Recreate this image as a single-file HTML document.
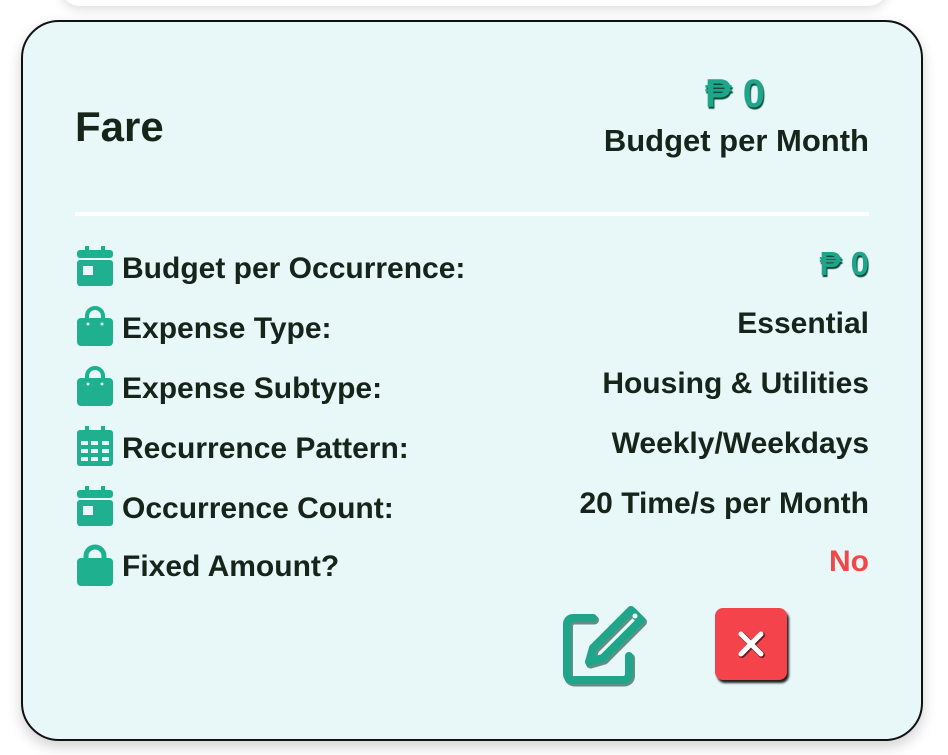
<!DOCTYPE html>
<html><head><style>
body{margin:0;width:948px;height:755px;background:#fff;position:relative;overflow:hidden;font-family:"Liberation Sans",Arial,sans-serif;}
.top{position:absolute;left:60px;top:-20px;width:828px;height:26px;background:#fff;border-radius:0 0 20px 20px;box-shadow:0 4px 10px rgba(0,0,0,.12);}
.card{position:absolute;left:21px;top:20px;width:898px;height:717px;border:2px solid #111;border-radius:38px;background:#e8f7f8;box-shadow:0 6px 14px rgba(0,0,0,.18);}
.t{position:absolute;color:#16241a;font-weight:bold;white-space:nowrap;}
.g{color:#1fa68a;text-shadow:1px 2px 1px #0a4a3a;}
.row{position:absolute;left:54px;width:792px;height:40px;}
.row svg{position:absolute;left:0;top:0;}
.row .l{left:45px;font-size:30px;top:6px;}
.row .v{right:0;font-size:30px;top:1px;}
</style></head><body>
<div class="top"></div>
<div class="card">
<div class="t" style="left:52px;top:81px;font-size:42px;">Fare</div>
<div class="t g" style="left:682px;top:50px;font-size:40px;">₱ 0</div>
<div class="t" style="right:52px;top:101px;font-size:31px;">Budget per Month</div>
<div style="position:absolute;left:52px;top:190px;width:794px;height:4px;background:#fff;"></div>

<div class="row" style="top:224px"><svg width="36" height="42" viewBox="0 0 36 42"><rect x="8" y="0" width="4" height="8" fill="#1fb08f"/><rect x="24" y="0" width="4" height="8" fill="#1fb08f"/><rect x="0" y="4" width="36" height="8" rx="3" fill="#1fb08f"/><rect x="0" y="14" width="36" height="26" rx="3" fill="#1fb08f"/><rect x="6" y="20" width="10" height="9" fill="#e8f7f8"/></svg><div class="t l">Budget per Occurrence:</div><div class="t v g" style="font-size:33px;top:-1px">₱ 0</div></div>

<div class="row" style="top:284px"><svg width="36" height="42" viewBox="0 0 36 42"><path d="M10 14V10a8 8 0 0 1 16 0v4" fill="none" stroke="#1fb08f" stroke-width="4"/><rect x="0" y="12" width="36" height="28" rx="4" fill="#1fb08f"/><circle cx="11" cy="18" r="1.5" fill="#e8f7f8"/><circle cx="25" cy="18" r="1.5" fill="#e8f7f8"/></svg><div class="t l">Expense Type:</div><div class="t v">Essential</div></div>

<div class="row" style="top:344px"><svg width="36" height="42" viewBox="0 0 36 42"><path d="M10 14V10a8 8 0 0 1 16 0v4" fill="none" stroke="#1fb08f" stroke-width="4"/><rect x="0" y="12" width="36" height="28" rx="4" fill="#1fb08f"/><circle cx="11" cy="18" r="1.5" fill="#e8f7f8"/><circle cx="25" cy="18" r="1.5" fill="#e8f7f8"/></svg><div class="t l">Expense Subtype:</div><div class="t v">Housing &amp; Utilities</div></div>

<div class="row" style="top:404px"><svg width="36" height="42" viewBox="0 0 36 42"><rect x="8" y="0" width="4" height="8" fill="#1fb08f"/><rect x="24" y="0" width="4" height="8" fill="#1fb08f"/><rect x="0" y="4" width="36" height="36" rx="3" fill="#1fb08f"/><g fill="#e8f7f8"><rect x="4" y="15" width="7" height="4"/><rect x="14" y="15" width="7" height="4"/><rect x="25" y="15" width="7" height="4"/><rect x="4" y="23" width="7" height="4"/><rect x="14" y="23" width="7" height="4"/><rect x="25" y="23" width="7" height="4"/><rect x="4" y="31" width="7" height="4"/><rect x="14" y="31" width="7" height="4"/><rect x="25" y="31" width="7" height="4"/></g></svg><div class="t l">Recurrence Pattern:</div><div class="t v">Weekly/Weekdays</div></div>

<div class="row" style="top:464px"><svg width="36" height="42" viewBox="0 0 36 42"><rect x="8" y="0" width="4" height="8" fill="#1fb08f"/><rect x="24" y="0" width="4" height="8" fill="#1fb08f"/><rect x="0" y="4" width="36" height="8" rx="3" fill="#1fb08f"/><rect x="0" y="14" width="36" height="26" rx="3" fill="#1fb08f"/><rect x="6" y="20" width="10" height="9" fill="#e8f7f8"/></svg><div class="t l">Occurrence Count:</div><div class="t v">20 Time/s per Month</div></div>

<div class="row" style="top:522px"><svg width="36" height="42" viewBox="0 0 36 42"><path d="M9 16V12a9 9 0 0 1 18 0v4" fill="none" stroke="#1fb08f" stroke-width="5"/><rect x="0" y="14" width="36" height="28" rx="4" fill="#1fb08f"/></svg><div class="t l">Fixed Amount?</div><div class="t v" style="color:#f04848">No</div></div>

<svg style="position:absolute;left:538px;top:582px" width="90" height="86" viewBox="0 0 90 86"><g fill="none" stroke="#0a4a3a" stroke-width="9" stroke-linecap="round" stroke-linejoin="round" transform="translate(1.5,2)" opacity=".6"><path d="M32 14H12a6 6 0 0 0-6 6v50a6 6 0 0 0 6 6h50a6 6 0 0 0 6-6V52"/><path d="M70 6l10 10-38 38-14 4 4-14z"/></g><g fill="none" stroke="#1fa68a" stroke-width="8" stroke-linecap="round" stroke-linejoin="round"><path d="M32 14H12a6 6 0 0 0-6 6v50a6 6 0 0 0 6 6h50a6 6 0 0 0 6-6V52"/><path d="M70 6l10 10-38 38-14 4 4-14z"/></g><circle cx="74" cy="12" r="2.5" fill="#e8f7f8"/></svg>

<div style="position:absolute;left:692px;top:586px;width:72px;height:72px;background:#f4434a;border-radius:8px;box-shadow:2px 3px 2px #222;"></div>
<svg style="position:absolute;left:714px;top:608px" width="28" height="28" viewBox="0 0 28 28"><path d="M4 4L24 24M24 4L4 24" stroke="#6b1b1b" stroke-width="6" stroke-linecap="round" transform="translate(1,1)"/><path d="M4 4L24 24M24 4L4 24" stroke="#fff" stroke-width="5" stroke-linecap="round"/></svg>
</div>
</body></html>
